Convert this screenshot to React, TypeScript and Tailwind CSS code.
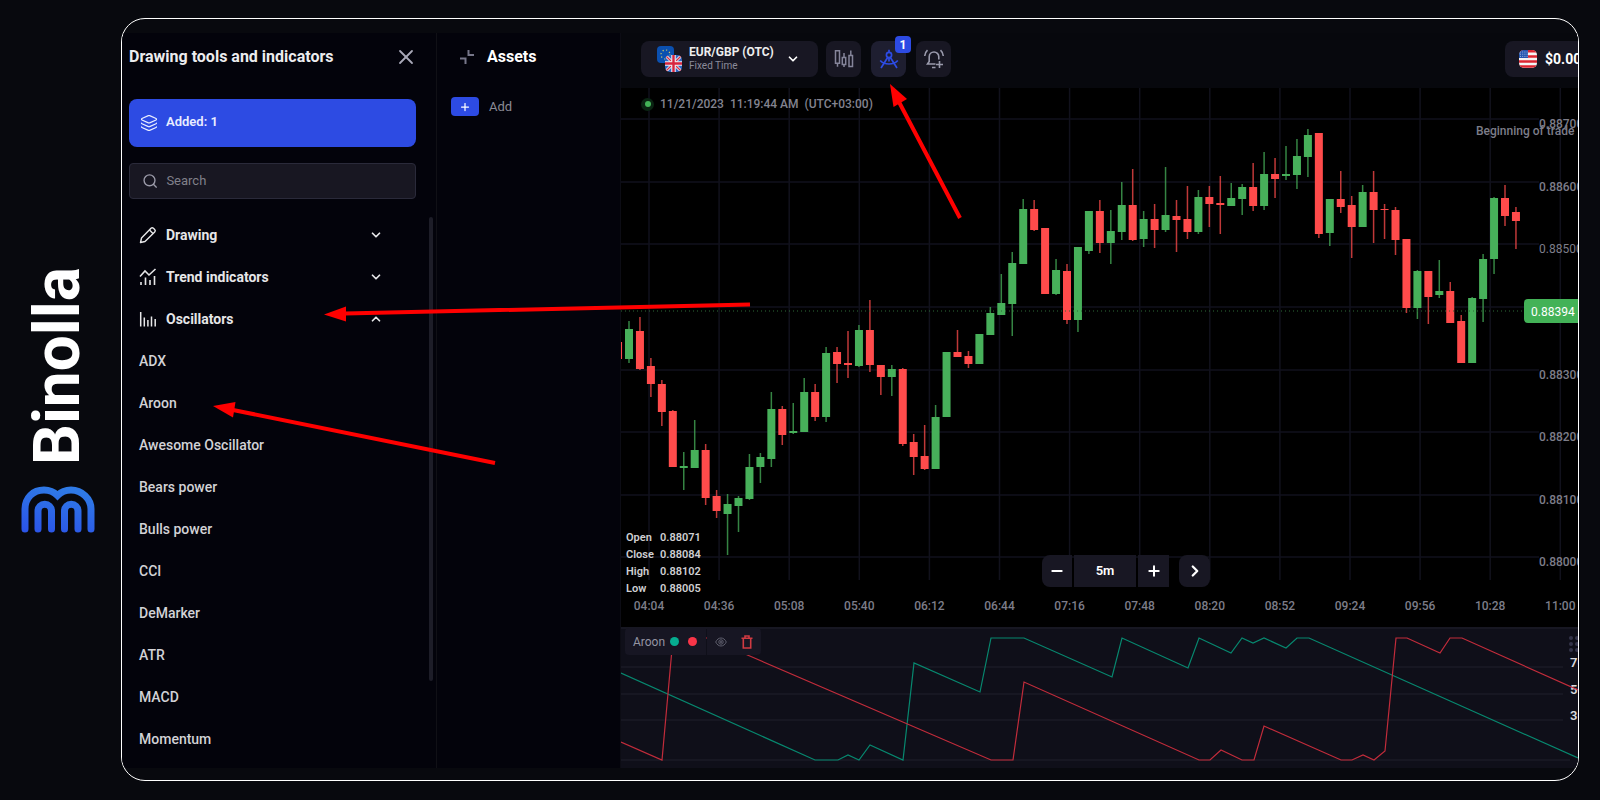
import { ChevronDown, ChevronRight, ChevronUp, Layers, Minus, Plus, Search, X } from "lucide-react";

type Candle = [kind: "up" | "down", high: number, top: number, bottom: number, low: number];

const STEP = 10.95;

const candles: Candle[] = [
  ["down", 254, 254, 271, 271],
  ["up", 233, 241, 271, 275],
  ["down", 229, 243, 281, 282],
  ["down", 270, 278, 296, 309],
  ["down", 292, 296, 324, 338],
  ["down", 322, 323, 379, 379],
  ["up", 364, 378, 380, 402],
  ["up", 332, 362, 380, 380],
  ["down", 356, 362, 410, 417],
  ["down", 402, 408, 423, 430],
  ["up", 406, 416, 426, 467],
  ["up", 408, 410, 418, 444],
  ["up", 366, 379, 411, 412],
  ["up", 365, 369, 379, 395],
  ["up", 304, 321, 371, 379],
  ["down", 318, 321, 347, 357],
  ["up", 315, 343, 345, 346],
  ["up", 290, 304, 344, 344],
  ["down", 296, 304, 329, 333],
  ["up", 259, 265, 329, 334],
  ["down", 259, 264, 276, 295],
  ["down", 243, 275, 277, 290],
  ["up", 237, 242, 278, 279],
  ["down", 212, 242, 277, 284],
  ["down", 277, 277, 289, 307],
  ["up", 277, 281, 289, 308],
  ["down", 280, 281, 356, 358],
  ["down", 346, 354, 369, 387],
  ["down", 337, 368, 381, 382],
  ["up", 317, 329, 381, 381],
  ["up", 264, 264, 329, 329],
  ["down", 242, 264, 269, 269],
  ["down", 263, 268, 276, 280],
  ["up", 246, 246, 276, 276],
  ["up", 219, 225, 247, 247],
  ["up", 186, 215, 227, 227],
  ["up", 164, 175, 216, 248],
  ["up", 111, 121, 176, 176],
  ["down", 112, 121, 142, 143],
  ["down", 140, 140, 206, 206],
  ["up", 171, 182, 206, 207],
  ["down", 176, 183, 232, 236],
  ["up", 159, 159, 232, 244],
  ["up", 123, 123, 163, 166],
  ["down", 112, 123, 155, 165],
  ["up", 122, 143, 155, 176],
  ["up", 94, 117, 144, 152],
  ["down", 81, 117, 152, 153],
  ["up", 123, 131, 151, 159],
  ["down", 116, 131, 142, 160],
  ["up", 79, 127, 142, 144],
  ["down", 112, 128, 132, 164],
  ["down", 98, 131, 144, 151],
  ["up", 102, 109, 144, 146],
  ["down", 98, 109, 116, 139],
  ["down", 88, 115, 117, 146],
  ["up", 95, 110, 118, 118],
  ["up", 96, 99, 111, 127],
  ["down", 75, 99, 118, 123],
  ["up", 64, 86, 118, 122],
  ["down", 70, 86, 91, 110],
  ["up", 58, 86, 88, 92],
  ["up", 51, 68, 87, 101],
  ["up", 41, 47, 69, 89],
  ["down", 45, 45, 146, 150],
  ["up", 111, 111, 145, 158],
  ["down", 83, 111, 119, 125],
  ["down", 108, 117, 139, 170],
  ["up", 97, 104, 139, 139],
  ["down", 83, 104, 122, 155],
  ["down", 116, 121, 122, 151],
  ["down", 119, 122, 152, 167],
  ["down", 151, 151, 220, 225],
  ["up", 182, 183, 220, 231],
  ["down", 183, 183, 209, 236],
  ["up", 172, 203, 207, 210],
  ["down", 194, 203, 235, 235],
  ["down", 227, 233, 275, 275],
  ["up", 209, 210, 275, 275],
  ["up", 166, 171, 211, 234],
  ["up", 109, 110, 171, 186],
  ["down", 97, 110, 128, 138],
  ["down", 119, 124, 133, 161],
];

const times = ["04:04", "04:36", "05:08", "05:40", "06:12", "06:44", "07:16", "07:48", "08:20", "08:52", "09:24", "09:56", "10:28", "11:00"];

const prices = [
  { y: 31, label: "0.88700" },
  { y: 94, label: "0.88600" },
  { y: 156, label: "0.88500" },
  { y: 219, label: "" },
  { y: 282, label: "0.88300" },
  { y: 344, label: "0.88200" },
  { y: 407, label: "0.88100" },
  { y: 469, label: "0.88000" },
];

const ohlc = [
  ["Open", "0.88071"],
  ["Close", "0.88084"],
  ["High", "0.88102"],
  ["Low", "0.88005"],
];

const AROON_UP =
  "0,46 194,133 217,133 227,128 238,133 249,118 282,133 293,36 359,65 370,11 403,11 491,50 501,11 567,41 578,11 610,26 621,11 632,16 643,11 665,21 676,11 688,11 957,131";
const AROON_DOWN =
  "0,115 41,133 52,11 87,11 370,133 392,133 403,55 578,133 589,133 600,123 621,133 633,133 643,99 720,133 731,133 742,128 753,133 764,124 775,11 786,11 819,26 829,11 841,11 957,63";

const oscillators = ["ADX", "Aroon", "Awesome Oscillator", "Bears power", "Bulls power", "CCI", "DeMarker", "ATR", "MACD", "Momentum"];

function Logo() {
  return (
    <svg width="74" height="47" viewBox="0 0 74 47" fill="none" strokeWidth="7" strokeLinecap="round">
      <defs>
        <linearGradient id="logo" x1="20" y1="47" x2="30" y2="0" gradientUnits="userSpaceOnUse">
          <stop stopColor="#2b55e8" />
          <stop offset="1" stopColor="#2f7ae6" />
        </linearGradient>
      </defs>
      <g stroke="url(#logo)">
        <path d="M4 43V23C4 12 12 4 23 4c5 0 10 2 13.500 5.500C40 6 45 4 50 4c11 0 20 9 20 19v20" />
        <path d="M17 43V25a6.700 6.700 0 0 1 13.500 0v18" />
        <path d="M43.500 43V25a6.700 6.700 0 0 1 13.500 0v18" />
      </g>
    </svg>
  );
}

function PencilIcon() {
  return (
    <svg width="18" height="18" viewBox="0 0 18 18" fill="none" stroke="currentColor" strokeWidth="1.4" strokeLinejoin="round">
      <path d="M1.500 16.500l1-4.500L12 2.300a1.700 1.700 0 0 1 2.400 0l1.300 1.300a1.700 1.700 0 0 1 0 2.400L6 15.500z" />
      <path d="M10.500 4l3.500 3.500" />
    </svg>
  );
}

function TrendIcon() {
  return (
    <svg width="18" height="18" viewBox="0 0 18 18" fill="none" stroke="currentColor" strokeWidth="1.6">
      <path d="M1 8.500l5-5.500 4 4L16.500 1" />
      <path d="M2 17v-3M6.500 17V9.500M11 17v-5M15.500 17V8" />
    </svg>
  );
}

function BarsIcon() {
  return (
    <svg width="18" height="18" viewBox="0 0 18 18" fill="none" stroke="currentColor" strokeWidth="1.5">
      <path d="M1.700 2v14.500M5.300 7.500v9M8.900 10v6.500M12.500 6.500v10M16.200 9v7.500" />
    </svg>
  );
}

function CollapseIcon() {
  return (
    <svg width="16" height="16" viewBox="0 0 16 16" fill="none" stroke="currentColor" strokeWidth="2">
      <path d="M9.500 1v5H15M1 9.500h5.500V15" />
    </svg>
  );
}

function CandlesIcon() {
  return (
    <svg width="20" height="20" viewBox="0 0 20 20" fill="none" stroke="currentColor" strokeWidth="1.500">
      <path d="M1.500 1.700h4v12.600h-4zM3.500 14.300v3.500M8.300 8.500h3.400v7H8.300zM10 8.500V4M10 15.500V18M15 6.500h3.500v11H15zM16.800 6.500V1.500" />
    </svg>
  );
}

function CompassIcon() {
  return (
    <svg width="20" height="20" viewBox="0 0 20 20" fill="none" stroke="currentColor" strokeWidth="1.700">
      <circle cx="10" cy="6" r="2.600" />
      <path d="M10 3.400V.7M8.800 8.300L2 19M11.200 8.300L18 19M1.200 11.500C4 14.500 7 15 10 15s6-.5 8.800-3.500M10 9v3.500" />
    </svg>
  );
}

function BellIcon() {
  return (
    <svg width="22" height="22" viewBox="0 0 22 22" fill="none" stroke="currentColor" strokeWidth="1.600">
      <path d="M12.500 16H4.500l1.700-2.500V8.800a4.800 4.800 0 0 1 9.600 0v2.700M9 19.500h3.500M16.500 13v7M13 16.500h7" />
      <path d="M4.500 2.200C3 3.500 2 5.500 1.700 8M17.500 2.200C19 3.500 20 5.500 20.300 8" />
    </svg>
  );
}

function TrashIcon() {
  return (
    <svg width="12" height="14" viewBox="0 0 12 14" fill="none" stroke="currentColor" strokeWidth="1.600">
      <path d="M.500 3.300h11M4 3V1h4v2M2.300 3.500V13h7.400V3.500" />
    </svg>
  );
}

function PairFlags() {
  return (
    <svg width="26" height="26" viewBox="0 0 26 26">
      <defs>
        <clipPath id="uk">
          <rect x="8" y="9" width="17" height="17" rx="5" />
        </clipPath>
      </defs>
      <rect width="17" height="17" rx="4" fill="#0b50b0" />
      <circle cx="8.500" cy="8.500" r="4.500" fill="none" stroke="#c9c46a" strokeWidth="1.200" strokeDasharray="1.200 2.330" />
      <g clipPath="url(#uk)">
        <rect x="8" y="9" width="17" height="17" fill="#2f66c4" />
        <path d="M8 9l17 17M25 9L8 26" stroke="#eef0f5" strokeWidth="3" />
        <path d="M8 9l17 17M25 9L8 26" stroke="#d8324a" strokeWidth="1.300" />
        <path d="M16.500 9v17M8 17.500h17" stroke="#eef0f5" strokeWidth="4.500" />
        <path d="M16.500 9v17M8 17.500h17" stroke="#d8253f" strokeWidth="2.400" />
      </g>
    </svg>
  );
}

function UsFlag() {
  return (
    <svg width="18" height="18" viewBox="0 0 18 18" className="shrink-0">
      <defs>
        <clipPath id="us">
          <rect width="18" height="18" rx="5" />
        </clipPath>
      </defs>
      <g clipPath="url(#us)">
        <rect width="18" height="18" fill="#f4f4f4" />
        <path d="M0 1.300h18M0 6.400h18M0 11.500h18M0 16.600h18" stroke="#dc2430" strokeWidth="2.500" />
        <rect width="9" height="8" fill="#2456b0" />
        <path d="M1 2h8M1 4.200h8M1 6.400h8" stroke="#b9c9ea" strokeWidth=".8" strokeDasharray="1 1.200" />
      </g>
    </svg>
  );
}

function EyeIcon() {
  return (
    <svg width="12" height="10" viewBox="0 0 12 10" fill="none" stroke="currentColor">
      <path d="M.7 5C2 2.300 3.800 1 6 1s4 1.300 5.300 4C10 7.700 8.200 9 6 9S2 7.700.7 5z" />
      <circle cx="6" cy="5" r="2.200" />
      <circle cx="6" cy="5" r=".7" />
    </svg>
  );
}

const groups = [
  { title: "Drawing", icon: <PencilIcon />, open: false },
  { title: "Trend indicators", icon: <TrendIcon />, open: false },
  { title: "Oscillators", icon: <BarsIcon />, open: true },
];

function ToolsPanel() {
  return (
    <aside className="flex w-[315px] shrink-0 flex-col border-r border-[#101016] pl-[7px]">
      <div className="flex h-12 items-center justify-between pr-[18px]">
        <h2 className="text-base font-bold text-[#ececee]">Drawing tools and indicators</h2>
        <button type="button" aria-label="Close" className="text-[#a9a9b8]">
          <X size={24} strokeWidth={1.8} />
        </button>
      </div>
      <button type="button" className="mt-[18px] mr-5 flex h-12 items-center gap-2 rounded-lg bg-[#2d4be3] pl-[11px] text-[13px] font-semibold text-[#e9edff]">
        <Layers size={18} strokeWidth={1.6} />
        <span className="pb-[3px]">Added: 1</span>
      </button>
      <label className="mt-4 mr-5 flex h-9 items-center gap-2 rounded border border-[#2a2a3a] bg-[#181722] pl-3 text-[#9a9aa8]">
        <Search size={18} strokeWidth={2} />
        <input type="search" aria-label="Search" placeholder="Search" className="w-full bg-transparent text-[13px] outline-none placeholder:text-[#80808a]" />
      </label>
      <div className="mt-[15px] flex min-h-0 flex-1 justify-between overflow-hidden pr-[3px]">
        <ul className="w-[254px]">
          {groups.map((g) => (
            <li key={g.title}>
              <button type="button" aria-expanded={g.open} className="flex h-[42px] w-full items-center gap-[9px] pl-[10px] text-[#e6e6e8]">
                {g.icon}
                <span className="flex-1 text-left text-sm font-bold">{g.title}</span>
                {g.open ? <ChevronUp size={14} strokeWidth={3} /> : <ChevronDown size={14} strokeWidth={3} />}
              </button>
            </li>
          ))}
          {oscillators.map((name) => (
            <li key={name}>
              <button type="button" className="h-[42px] w-full pl-[10px] text-left text-sm font-medium text-[#d2d2d6]">
                {name}
              </button>
            </li>
          ))}
        </ul>
        <div className="mt-[3px] h-[464px] w-1 rounded-full bg-[#1d1d28]" />
      </div>
    </aside>
  );
}

function AssetsPanel() {
  return (
    <aside className="w-[184px] shrink-0 border-r border-[#0c0c14]">
      <div className="flex h-12 items-center gap-3 pl-[22px]">
        <span className="text-[#77778a]">
          <CollapseIcon />
        </span>
        <h2 className="text-base font-bold text-white">Assets</h2>
      </div>
      <button type="button" className="mt-4 ml-[14px] flex items-center gap-[10px] text-[13px] text-[#8b8b96]">
        <span className="flex h-[19px] w-7 items-center justify-center rounded bg-[#2d4be3] text-white">
          <Plus size={12} strokeWidth={2.5} />
        </span>
        Add
      </button>
    </aside>
  );
}

function TopBar() {
  return (
    <header className="flex h-[55px] shrink-0 items-start bg-[#07080d] pt-2 pl-5">
      <button type="button" className="flex h-9 w-[177px] items-center rounded-lg bg-[#181723] pl-4 text-left">
        <PairFlags />
        <span className="ml-[6px] flex flex-col">
          <span className="text-xs leading-[14px] font-bold text-[#eeeeee]">EUR/GBP (OTC)</span>
          <span className="text-[10px] leading-[14px] text-[#8b8b9a]">Fixed Time</span>
        </span>
        <span className="ml-3 text-white">
          <ChevronDown size={14} strokeWidth={3} />
        </span>
      </button>
      <button type="button" aria-label="Chart type" className="ml-2 flex h-9 w-[35px] items-center justify-center rounded-lg bg-[#181723] text-[#85859a]">
        <CandlesIcon />
      </button>
      <button type="button" aria-label="Indicators" className="relative ml-[10px] flex h-9 w-[35px] items-center justify-center rounded-lg bg-[#1e1e30] text-[#2d4be3]">
        <CompassIcon />
        <span className="absolute -top-[5px] -right-[5px] flex h-[17px] w-4 items-center justify-center rounded bg-[#2d4be3] text-xs font-bold text-white">1</span>
      </button>
      <button type="button" aria-label="Alerts" className="ml-[10px] flex h-9 w-[35px] items-center justify-center rounded-lg bg-[#181723] text-[#9a9aac]">
        <BellIcon />
      </button>
      <button type="button" className="ml-auto flex h-9 w-[73px] shrink-0 items-center gap-2 rounded-l-lg bg-[#181723] pl-[14px] text-sm font-bold text-white">
        <UsFlag />
        $0.00
      </button>
    </header>
  );
}

function CandleChart() {
  return (
    <div className="relative min-h-0 flex-1 bg-black">
      <svg className="block h-full w-full">
        <g stroke="#11111c" strokeWidth="1.500">
          {prices.map((p) => (
            <line key={p.y} x1="0" x2={p.label ? 918 : 903} y1={p.y} y2={p.y} />
          ))}
          {times.map((t, i) => (
            <line key={t} x1={28 + i * 70.1} x2={28 + i * 70.1} y1="0" y2="492" />
          ))}
        </g>
        {candles.map(([kind, high, top, bottom, low], i) => {
          const x = 8 + (i - 1) * STEP;
          return (
            <g key={i} fill={kind === "up" ? "#47b05a" : "#ff4b4b"}>
              <rect x={x - 0.75} y={high} width="1.500" height={low - high} opacity=".75" />
              <rect x={x - 4} y={top} width="8" height={bottom - top} />
            </g>
          );
        })}
        <line x1="0" x2="903" y1="223" y2="223" stroke="#2c6b37" strokeDasharray="1 3" />
        <g fontSize="12" fontWeight="500" fill="#7d7d89">
          {prices.map((p) => (
            <text key={p.y} x="918" y={p.y + 9} fontWeight={p.label === "0.88500" ? 400 : 500}>
              {p.label}
            </text>
          ))}
          <text x="855" y="47">Beginning of trade</text>
          {times.map((t, i) => (
            <text key={t} x={28 + i * 70.1} y="522" textAnchor="middle">
              {t}
            </text>
          ))}
        </g>
        <rect x="903" y="211" width="70" height="24" rx="4" fill="#43b257" />
        <text x="910" y="228" fontSize="12" fill="#fff">
          0.88394
        </text>
      </svg>

      <p className="absolute top-2 left-5 flex items-center gap-[6px] text-xs font-medium whitespace-pre text-[#83838f]">
        <span className="flex size-[13px] items-center justify-center rounded-full bg-[#0a2412]">
          <span className="size-[6px] rounded-full bg-[#43b257]" />
        </span>
        {"11/21/2023  11:19:44 AM  (UTC+03:00)"}
      </p>

      <table className="absolute bottom-[30px] left-[5px] text-[11px] leading-[17px] font-semibold text-[#cfcfd2]">
        <tbody>
          {ohlc.map(([name, value]) => (
            <tr key={name}>
              <th scope="row" className="w-[34px] text-left font-semibold">{name}</th>
              <td>{value}</td>
            </tr>
          ))}
        </tbody>
      </table>

      <div className="absolute bottom-10 left-[421px] flex h-8 gap-[2px] text-[13px] font-semibold text-white">
        <button type="button" aria-label="Zoom out" className="flex w-[30px] items-center justify-center rounded-l-lg bg-[#181723]">
          <Minus size={16} strokeWidth={3} />
        </button>
        <button type="button" className="w-[62px] bg-[#181723]">5m</button>
        <button type="button" aria-label="Zoom in" className="flex w-[31px] items-center justify-center bg-[#181723]">
          <Plus size={16} strokeWidth={3} />
        </button>
        <button type="button" aria-label="Scroll to end" className="ml-2 flex w-[31px] items-center justify-center rounded-lg bg-[#181723]">
          <ChevronRight size={18} strokeWidth={3} />
        </button>
      </div>
    </div>
  );
}

function AroonPane() {
  return (
    <div className="relative h-[141px] shrink-0 bg-[#0f0f19]">
      <svg className="block h-full w-full" fill="none">
        <g stroke="#1b1b26" strokeWidth="1.500">
          <path d="M0 1h957M0 40h942M0 67h942M0 93h942M0 133h949" />
        </g>
        <g fontSize="13" fontWeight="600" fill="#d8d8dc">
          <text x="949" y="40">70</text>
          <text x="949" y="67">50</text>
          <text x="949" y="93">30</text>
        </g>
        <g fill="#34344a">
          {[11, 17, 23].map((y) => (
            <g key={y}>
              <circle cx="950" cy={y} r="2" />
              <circle cx="956" cy={y} r="2" />
            </g>
          ))}
        </g>
        <polyline points={AROON_UP} stroke="#07886f" strokeWidth="1.200" />
        <polyline points={AROON_DOWN} stroke="#c22c3b" strokeWidth="1.200" />
      </svg>
      <div className="absolute top-px left-1 flex h-[27px] gap-px">
        <div className="flex w-[81px] items-center rounded-l bg-[#171623] pl-2 text-xs text-[#9494a2]">
          Aroon
          <span className="ml-[5px] size-[9px] rounded-full bg-[#06ad90]" />
          <span className="ml-[9px] size-[9px] rounded-full bg-[#f93548]" />
        </div>
        <div className="flex w-[54px] items-center gap-[14px] rounded-r bg-[#171623] pl-2">
          <button type="button" aria-label="Hide indicator" className="text-[#5f5f6e]">
            <EyeIcon />
          </button>
          <button type="button" aria-label="Remove indicator" className="text-[#d03a42]">
            <TrashIcon />
          </button>
        </div>
      </div>
    </div>
  );
}

function Arrows() {
  return (
    <svg className="pointer-events-none absolute inset-0 h-full w-full" stroke="#ff0000" strokeWidth="4" fill="#ff0000">
      <path d="M750 304.500L345 313.500M495 463L233 410M960 218L899 102" />
      <g stroke="none">
        <path d="M324 314.500l22-8v15z" />
        <path d="M213 406l22.500-4-2.500 15.500z" />
        <path d="M890 84l17 15-13.500 8z" />
      </g>
    </svg>
  );
}

export default function App() {
  return (
    <div className="relative flex h-screen overflow-hidden bg-[#08090e] font-[Roboto,sans-serif]">
      <div className="flex w-[121px] shrink-0 flex-col items-center justify-center gap-[22px] pr-[5px]">
        <span className="rotate-180 text-[64px] leading-[70px] font-bold text-white [writing-mode:vertical-rl]">Binolla</span>
        <Logo />
      </div>
      <main className="mt-[18px] mr-[21px] mb-[19px] flex min-w-0 flex-1 overflow-hidden rounded-3xl border border-white pt-[14px] pb-3">
        <div className="flex min-w-0 flex-1 bg-[#03030b]">
          <ToolsPanel />
          <AssetsPanel />
          <section className="flex min-w-0 flex-1 flex-col">
            <TopBar />
            <CandleChart />
            <AroonPane />
          </section>
        </div>
      </main>
      <Arrows />
    </div>
  );
}
